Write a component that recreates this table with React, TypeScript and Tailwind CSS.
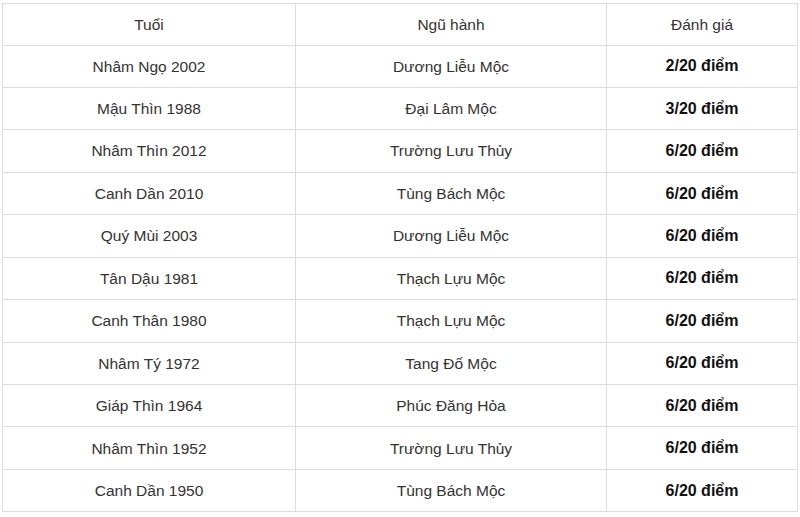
import React from "react";

const rows = [
  ["Nhâm Ngọ 2002", "Dương Liễu Mộc", "2/20 điểm"],
  ["Mậu Thìn 1988", "Đại Lâm Mộc", "3/20 điểm"],
  ["Nhâm Thìn 2012", "Trường Lưu Thủy", "6/20 điểm"],
  ["Canh Dần 2010", "Tùng Bách Mộc", "6/20 điểm"],
  ["Quý Mùi 2003", "Dương Liễu Mộc", "6/20 điểm"],
  ["Tân Dậu 1981", "Thạch Lựu Mộc", "6/20 điểm"],
  ["Canh Thân 1980", "Thạch Lựu Mộc", "6/20 điểm"],
  ["Nhâm Tý 1972", "Tang Đố Mộc", "6/20 điểm"],
  ["Giáp Thìn 1964", "Phúc Đăng Hỏa", "6/20 điểm"],
  ["Nhâm Thìn 1952", "Trường Lưu Thủy", "6/20 điểm"],
  ["Canh Dần 1950", "Tùng Bách Mộc", "6/20 điểm"],
];

const App = () => {
  return (
    <div className="w-[800px] h-[517px] bg-white pt-[3px] pl-[2px] font-['Liberation_Sans',Arial,sans-serif] text-[15.5px] text-[#333]">
      <table className="w-[795px] border-collapse table-fixed">
        <colgroup>
          <col className="w-[293px]" />
          <col className="w-[311px]" />
          <col className="w-[191px]" />
        </colgroup>
        <thead>
          <tr className="h-[41.5px]">
            <th className="border border-[#dcdcdc] font-normal text-center">Tuổi</th>
            <th className="border border-[#dcdcdc] font-normal text-center">Ngũ hành</th>
            <th className="border border-[#dcdcdc] font-normal text-center">Đánh giá</th>
          </tr>
        </thead>
        <tbody>
          {rows.map(([tuoi, hanh, diem]) => (
            <tr key={tuoi} className="h-[42.45px]">
              <td className="border border-[#dcdcdc] text-center">{tuoi}</td>
              <td className="border border-[#dcdcdc] text-center">{hanh}</td>
              <td className="border border-[#dcdcdc] text-center font-bold text-[16px] text-[#111]">{diem}</td>
            </tr>
          ))}
        </tbody>
      </table>
    </div>
  );
};

export default App;
